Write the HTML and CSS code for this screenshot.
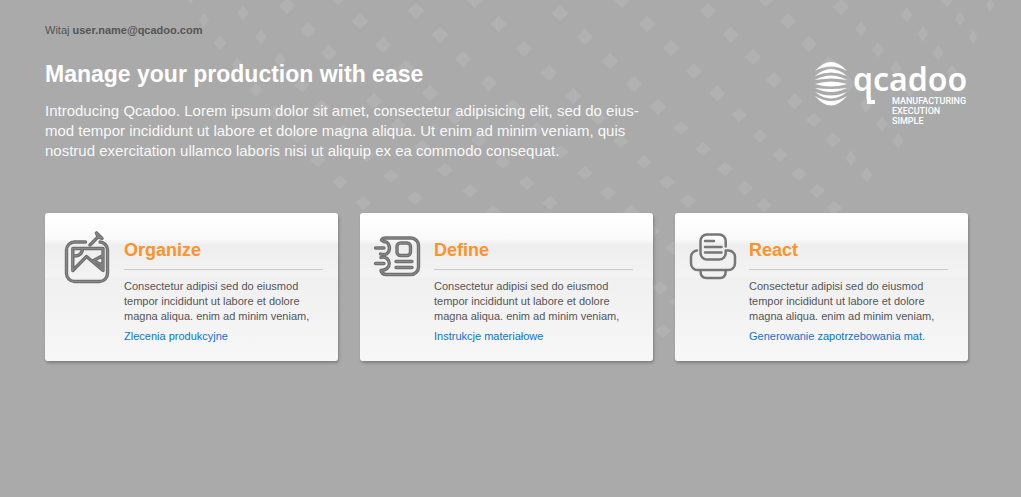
FILE: index.html
```html
<!DOCTYPE html>
<html lang="pl">
<head>
<meta charset="utf-8">
<title>Qcadoo</title>
<link rel="stylesheet" href="styles.css">
</head>
<body>
<svg class="pattern" width="1021" height="497" aria-hidden="true">
  <defs>
    <marker id="wide" markerUnits="userSpaceOnUse" markerWidth="18" markerHeight="18" refX="9" refY="9"><path class="diamond" d="M9 1l8 8-8 8-8-8z"/></marker>
    <marker id="low" markerUnits="userSpaceOnUse" markerWidth="18" markerHeight="18" refX="9" refY="9"><path class="diamond" d="M9 2l8 7-8 7-8-7z"/></marker>
    <marker id="slim" markerUnits="userSpaceOnUse" markerWidth="18" markerHeight="18" refX="9" refY="9"><path class="diamond" d="M9 1.500l6 7.500-6 7.500-6-7.500z"/></marker>
  </defs>
  <polyline class="dots-wide" points="287,6 308,30 329,53 360,21 383,45 416,11 440,35 463,59 338,-3 352,77 406,68 374,101 430,93 475,0 499,24 524,49 549,73 573,96 489,83 513,107 455,117 560,13 585,37 610,61 634,84 658,107 622,0 647,24 671,48 694,71 717,93 708,11 731,35 753,57 774,80 795,101 766,-1 788,21 809,44 829,64 848,84 841,7"/>
  <polyline class="dots-low" points="302,85 322,107 297,136 318,160 340,182 363,203 343,132 398,125 367,155 391,176 415,198 445,170 422,147 470,191 598,118 621,141 644,162 667,182 688,201 537,129 561,152 585,173 608,193 631,212 479,140 503,162 527,183 550,203 493,212 681,128 703,149 725,169 739,115 760,136 780,155 799,174 817,191 834,208 745,188 764,205 814,120 833,140 652,231 673,248 660,288 678,302 663,331"/>
  <polyline class="dots-slim" points="220,43 243,13 261,37 237,65 256,90 280,60 275,113 851,158 867,175 866,105 882,124 898,141 861,29 878,50 896,69 910,90 907,15 923,34 938,53 952,72 947,0"/>
  <path class="diamond" d="M191-10l4 7-4 7-4-7zM204 13l5 7-5 7-5-7zM960 12l5 7-5 7-5-7zM973 30l4 7-4 7-4-7zM990-2l4 7-4 7-4-7z"/>
</svg>
<div class="page">
  <p class="welcome">Witaj <strong>user.name@qcadoo.com</strong></p>
  <header class="hero">
    <div class="intro">
      <h1>Manage your production with ease</h1>
      <p>Introducing Qcadoo. Lorem ipsum dolor sit amet, consectetur adipisicing elit, sed do eius-<br>mod tempor incididunt ut labore et dolore magna aliqua. Ut enim ad minim veniam, quis<br>nostrud exercitation ullamco laboris nisi ut aliquip ex ea commodo consequat.</p>
    </div>
    <svg class="logo" width="154" height="68" viewBox="0 0 154 68" role="img" aria-label="qcadoo manufacturing execution simple">
      <path d="M1 10Q17-8 33 10Q17 1 1 10zM1 15Q17 1 33 15Q17 8 1 15zM1 19Q17 10 33 19Q17 16 1 19zM1 23Q17 18 33 23Q17 28 1 23zM1 27Q17 29 33 27Q17 35 1 27zM1 31Q17 38 33 31Q17 44 1 31zM1 35Q17 45 33 35Q17 54 1 35z"/>
      <text class="brand" x="39" y="30">qcadoo</text>
      <path d="M53 36h4v3h4v4h-8z"/>
      <text class="tagline" x="78" y="43">MANUFACTURING</text>
      <text class="tagline" x="78" y="53">EXECUTION</text>
      <text class="tagline" x="78" y="63">SIMPLE</text>
    </svg>
  </header>
  <main class="cards">
    <section class="card card-organize">
      <svg class="icon" width="65" height="65" viewBox="0 0 65 65" aria-hidden="true">
        <defs><g id="organize"><path d="M30.500 17H19.500a8 8 0 0 0-8 8v23.500a8 8 0 0 0 8 8H44.500a8 8 0 0 0 8-8V25a8 8 0 0 0-7.500-8M35 20l8.500-8.500M41.500 8l1.500 4 4 1.500M41.500 8l5 5"/><path d="M17.800 23.500H48V45.500L31.500 31.500 17.800 45.500zM19 31q8 0 8.500-7M38.500 35.500l9.500-5M38.500 36l9 4"/></g></defs>
        <use class="edge" href="#organize"/><use class="core" href="#organize"/>
      </svg>
      <div class="body">
        <h2>Organize</h2>
        <p>Consectetur adipisi sed do eiusmod tempor incididunt ut labore et dolore magna aliqua. enim ad minim veniam,</p>
        <a href="#">Zlecenia produkcyjne</a>
      </div>
    </section>
    <section class="card">
      <svg class="icon" width="65" height="65" viewBox="0 0 65 65" aria-hidden="true">
        <defs><g id="define"><path d="M16.500 15q1-2 4-2H46a7.500 7.500 0 0 1 7.500 7.500V42a7.500 7.500 0 0 1-7.500 7.500H21q-4 0-5-4M16.500 15q2 2 5 2c4 3 4 9 0 12q-3 1-6 0M16 32.500q3-1 6 1c3 3 3 7 0 10q-3 2-6 2M10.500 23H19M10.500 38.500H19"/><rect x="32" y="18" width="13.500" height="12.500" rx="3.500"/><path d="M31 36.500H47M31 42.500H47"/></g></defs>
        <use class="edge" href="#define"/><use class="core" href="#define"/>
      </svg>
      <div class="body">
        <h2>Define</h2>
        <p>Consectetur adipisi sed do eiusmod tempor incididunt ut labore et dolore magna aliqua. enim ad minim veniam,</p>
        <a href="#">Instrukcje materiałowe</a>
      </div>
    </section>
    <section class="card">
      <svg class="icon" width="65" height="65" viewBox="0 0 65 65" aria-hidden="true">
        <path class="solid" d="M45.700 21.500V16a6.500 6.500 0 0 0-6.500-6.500H27a6.500 6.500 0 0 0-6.500 6.500V28a6.500 6.500 0 0 0 6.500 6.500H39.200a6.500 6.500 0 0 0 6.500-6.500V25.500H48.500a6.500 6.500 0 0 1 6.500 6.500v6.500a6.500 6.500 0 0 1-6.500 6.500H17.500a6.500 6.500 0 0 1-6.500-6.500V32a6.500 6.500 0 0 1 6-6.500M20.500 46q0 7 6 7H40q5.700 0 5.700-7M25 16H34M25 22H41.500M25 27.500H41.500"/>
      </svg>
      <div class="body">
        <h2>React</h2>
        <p>Consectetur adipisi sed do eiusmod tempor incididunt ut labore et dolore magna aliqua. enim ad minim veniam,</p>
        <a href="#">Generowanie zapotrzebowania mat.</a>
      </div>
    </section>
  </main>
</div>
</body>
</html>
```
FILE: styles.css
```css
body {
  margin: 0;
  min-height: 100vh;
  background: #aaa;
  font-family: "Liberation Sans", Arial, sans-serif;
  color: #fff;
}
h1, h2, p { margin: 0; }
.pattern {
  position: absolute;
  top: 0;
  left: 0;
  z-index: -1;
}
.diamond { fill: #b1b1b1; }
.dots-wide, .dots-low, .dots-slim { fill: none; }
.dots-wide { marker: url(#wide); }
.dots-low { marker: url(#low); }
.dots-slim { marker: url(#slim); }
.page {
  padding: 24px 53px 0 45px;
}
.welcome {
  font-size: 11px;
  line-height: 13px;
  color: #555;
}
.hero {
  display: flex;
  justify-content: space-between;
  align-items: flex-start;
  padding-top: 22px;
}
.intro h1 {
  font-size: 23px;
  line-height: 30px;
}
.intro p {
  margin-top: 12px;
  font-size: 15px;
  line-height: 20px;
  color: #f8f8f8;
}
.logo {
  fill: #fff;
  margin-top: 2px;
  overflow: visible;
}
.brand {
  font: 600 32px "Noto Sans", sans-serif;
}
.tagline {
  font: 500 9px Roboto, sans-serif;
}
.cards {
  display: grid;
  grid-template-columns: repeat(3, 1fr);
  gap: 22px;
  margin-top: 52px;
}
.card {
  display: flex;
  gap: 4px;
  min-height: 124px;
  padding: 12px 20px 12px 5px;
  border-radius: 3px;
  background: linear-gradient(#fff 0, #fafafa 26px, #eee 32px, #f3f3f3 64px, #f0f0f0 66px, #f7f7f7 100%);
  box-shadow: 1px 2px 3px rgba(0, 0, 0, 0.25);
}
.card-organize { padding: 12px 15px 12px 10px; }
.icon {
  flex: none;
  fill: none;
  stroke-linecap: round;
  stroke-linejoin: round;
}
.edge { stroke: #707070; stroke-width: 3.4px; }
.core { stroke: #8b8b8b; stroke-width: 1px; }
.solid { stroke: #777; stroke-width: 2.5px; }
.body {
  flex: 1;
  padding-top: 14px;
}
.body h2 {
  padding-bottom: 8px;
  border-bottom: 1px solid #ccc;
  font-size: 18px;
  line-height: 22px;
  color: #ff9229;
}
.body p {
  padding-top: 9px;
  font-size: 11px;
  line-height: 15px;
  color: #555;
}
.body a {
  display: block;
  margin-top: 5px;
  font-size: 11px;
  line-height: 15px;
  color: #0f73cc;
  text-decoration: none;
}
```
